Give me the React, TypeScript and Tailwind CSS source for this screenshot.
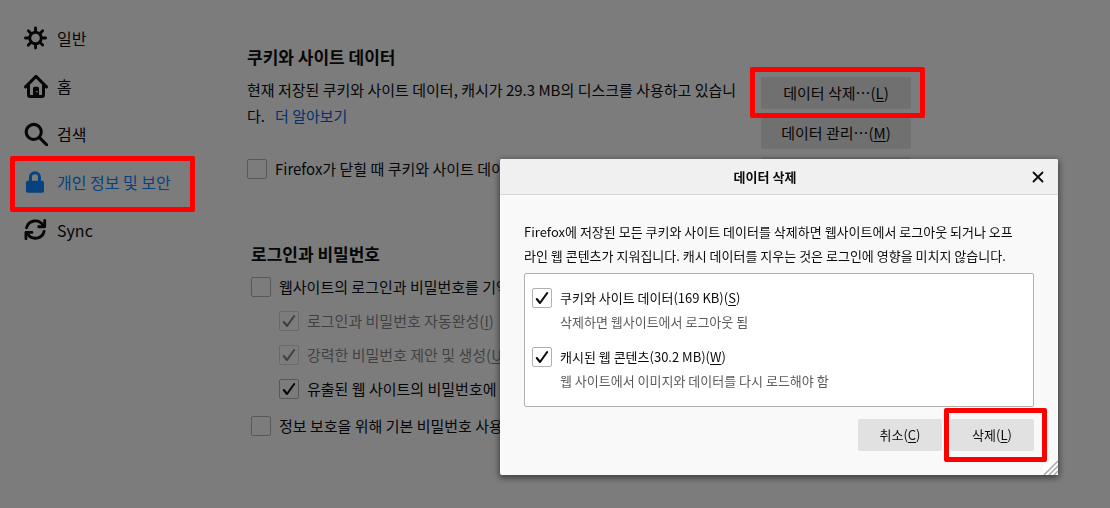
import { useState } from 'react'
import type { ReactNode } from 'react'
import { clsx } from 'clsx'

const GearIcon = () => (
  <svg viewBox="0 0 16 16" className="w-6 h-6" fill="currentColor" aria-hidden="true">
    <path d="M15 7h-2.1a4.967 4.967 0 0 0-.732-1.753l1.49-1.49a1 1 0 0 0-1.414-1.414l-1.49 1.49A4.968 4.968 0 0 0 9 3.1V1a1 1 0 0 0-2 0v2.1a4.968 4.968 0 0 0-1.753.732l-1.49-1.49a1 1 0 0 0-1.414 1.415l1.49 1.49A4.967 4.967 0 0 0 3.1 7H1a1 1 0 0 0 0 2h2.1a4.968 4.968 0 0 0 .737 1.763c-.014.013-.032.017-.045.03l-1.45 1.45a1 1 0 1 0 1.414 1.414l1.45-1.45c.013-.013.018-.031.03-.045A4.968 4.968 0 0 0 7 12.9V15a1 1 0 0 0 2 0v-2.1a4.968 4.968 0 0 0 1.753-.732l1.49 1.49a1 1 0 0 0 1.414-1.414l-1.49-1.49A4.967 4.967 0 0 0 12.9 9H15a1 1 0 0 0 0-2zM5 8a3 3 0 1 1 3 3 3 3 0 0 1-3-3z" transform="translate(0 .3) scale(.96)" />
  </svg>
)

const HomeIcon = () => (
  <svg viewBox="0 0 16 16" className="w-6 h-6" fill="none" stroke="currentColor" strokeWidth="2" strokeLinecap="round" strokeLinejoin="round" aria-hidden="true">
    <path d="M1 8.600l7-7 7 7" />
    <path d="M3 8V14a1 1 0 0 0 1 1h8a1 1 0 0 0 1-1V8" />
    <path d="M6 15V9.500a1 1 0 0 1 1-1h2a1 1 0 0 1 1 1V15zM8.600 11.200a.5.5 0 1 1-.01 0z" fill="currentColor" fillRule="evenodd" stroke="none" />
  </svg>
)

const SearchIcon = () => (
  <svg viewBox="0 0 16 16" className="w-6 h-6" fill="currentColor" aria-hidden="true">
    <path d="M15.707 14.293l-4.822-4.822a6.019 6.019 0 1 0-1.414 1.414l4.822 4.822a1 1 0 0 0 1.414-1.414zM6 10a4 4 0 1 1 4-4 4 4 0 0 1-4 4z" transform="translate(.5 .6)" />
  </svg>
)

const LockIcon = () => (
  <svg viewBox="0 0 16 16" className="w-6 h-6" aria-hidden="true">
    <rect x="1.300" y="7.200" width="12" height="8" rx="1.200" fill="currentColor" />
    <path d="M4.300 8V4.800a3 3 0 0 1 6 0V8" fill="none" stroke="currentColor" strokeWidth="2" />
  </svg>
)

const SyncIcon = () => (
  <svg viewBox="0 0 16 16" className="w-6 h-6" fill="none" stroke="currentColor" strokeWidth="1.900" strokeLinecap="round" strokeLinejoin="round" aria-hidden="true">
    <path d="M1.700 6.500A6 6 0 0 1 12.600 4.700" />
    <path d="M13.800 1.600V5.800H9.800" />
    <path d="M13.400 8.900A6 6 0 0 1 2.500 10.700" />
    <path d="M1.300 13.800V9.600H5.300" />
  </svg>
)

const NAV_ITEMS = [
  { id: 'general', label: '일반', icon: GearIcon },
  { id: 'home', label: '홈', icon: HomeIcon },
  { id: 'search', label: '검색', icon: SearchIcon },
  { id: 'privacy', label: '개인 정보 및 보안', icon: LockIcon },
  { id: 'sync', label: 'Sync', icon: SyncIcon },
]

// Red frame drawn above everything, including the backdrop
const Marker = ({ className }: { className: string }) => (
  <span className={clsx('absolute z-20 border-[5px] border-[#ff0000] rounded-xs pointer-events-none', className)} />
)

const Key = ({ children }: { children: string }) => (
  <>(<span className="underline underline-offset-2">{children}</span>)</>
)

interface CheckRowProps {
  id: string
  defaultChecked?: boolean
  disabled?: boolean
  className?: string
  children: ReactNode
}

function CheckRow({ id, defaultChecked, disabled, className, children }: CheckRowProps) {
  return (
    <div className={clsx('flex items-center gap-2', disabled && 'opacity-50', className)}>
      <span className="grid shrink-0">
        <input
          id={id}
          type="checkbox"
          defaultChecked={defaultChecked}
          disabled={disabled}
          className="peer col-start-1 row-start-1 appearance-none w-5 h-5 border border-[#b1b1b1] rounded-xs"
        />
        <svg viewBox="0 0 20 20" className="invisible peer-checked:visible col-start-1 row-start-1 w-5 h-5 pointer-events-none" fill="none" stroke="currentColor" strokeWidth="2.100" strokeLinecap="round" strokeLinejoin="round" aria-hidden="true">
          <path d="M4.800 11l3.200 4L15.200 5" />
        </svg>
      </span>
      <label htmlFor={id} className="whitespace-nowrap">{children}</label>
    </div>
  )
}

interface SettingsButtonProps {
  children?: ReactNode
  label?: string
  onClick?: () => void
}

const SettingsButton = ({ children, label, onClick }: SettingsButtonProps) => (
  <button type="button" aria-label={label} onClick={onClick} className="relative w-full h-8 rounded-xs bg-[#e1e1e2]">
    {children}
  </button>
)

function ClearDataDialog({ onClose }: { onClose: () => void }) {
  return (
    <div className="fixed inset-0 flex items-start justify-end pt-[159px] pr-[52px]">
      <div className="absolute inset-0 z-10 bg-black/50" />
      <section
        role="dialog"
        aria-labelledby="dialog-title"
        className="relative z-20 w-full max-w-[558px] rounded-xs bg-[#f9f9fa] text-[13px] leading-6 shadow-[0_2px_6px_1px_rgba(0,0,0,0.5)]"
      >
        <header className="flex items-center h-9 pr-3 border-b border-[#d7d7db] bg-[#f0f0f0] rounded-t-xs">
          <h2 id="dialog-title" className="flex-1 text-center font-bold">데이터 삭제</h2>
          <button type="button" aria-label="닫기" onClick={onClose} className="flex items-center justify-center w-4 h-6">
            <svg viewBox="0 0 16 16" className="w-4 h-4" fill="none" stroke="currentColor" strokeWidth="1.800" strokeLinecap="round" aria-hidden="true">
              <path d="M3.500 3.500l9 9M12.500 3.500l-9 9" />
            </svg>
          </button>
        </header>

        <div className="px-6 pt-[25px] pb-6">
          <p className="pr-3">
            Firefox에 저장된 모든 쿠키와 사이트 데이터를 삭제하면 웹사이트에서 로그아웃 되거나 오프라인 웹 콘텐츠가 지워집니다. 캐시 데이터를 지우는 것은 로그인에 영향을 미치지 않습니다.
          </p>

          <div className="flex flex-col gap-[11px] mt-[5px] px-[7px] pt-3 pb-[13px] bg-white border border-[#b1b1b1] rounded-xs">
            <div>
              <CheckRow id="clear-cookies" defaultChecked className="h-6">
                쿠키와 사이트 데이터(169 KB)<Key>S</Key>
              </CheckRow>
              <p className="pl-7 text-[#5b5b5f]">삭제하면 웹사이트에서 로그아웃 됨</p>
            </div>
            <div>
              <CheckRow id="clear-cache" defaultChecked className="h-6">
                캐시된 웹 콘텐츠(30.2 MB)<Key>W</Key>
              </CheckRow>
              <p className="pl-7 text-[#5b5b5f]">웹 사이트에서 이미지와 데이터를 다시 로드해야 함</p>
            </div>
          </div>

          <div className="flex justify-end gap-2 mt-3">
            <button type="button" onClick={onClose} className="w-[84px] h-8 rounded-xs bg-[#e1e1e1]">
              취소<Key>C</Key>
            </button>
            <button type="button" onClick={onClose} className="relative w-[84px] h-8 rounded-xs bg-[#e1e1e1]">
              삭제<Key>L</Key>
              <Marker className="-left-1.5 -right-[13px] -inset-y-[11px]" />
            </button>
          </div>
        </div>

        {/* Resize grip */}
        <svg viewBox="0 0 15 15" className="absolute right-0 bottom-0 w-[15px] h-[15px]" aria-hidden="true">
          <path d="M0 0h15v15H0z" fill="#fff" />
          <path d="M1 15L15 1M6 15l9-9M11 15l4-4" stroke="#a8a8a8" strokeWidth="1.500" />
        </svg>
      </section>
    </div>
  )
}

export default function App() {
  const [active, setActive] = useState('privacy')
  const [dialogOpen, setDialogOpen] = useState(true)

  return (
    <div className="flex min-h-screen overflow-hidden bg-[#f9f9fa] text-[#0c0c0d] text-[15px] leading-[26px] font-['Noto_Sans_CJK_KR',sans-serif]">
      <nav className="w-[247px] shrink-0 pt-3.5 pl-6 text-base">
        <ul>
          {NAV_ITEMS.map(({ id, label, icon: Icon }) => (
            <li key={id} className="flex">
              <a
                href={`#${id}`}
                onClick={() => setActive(id)}
                className={clsx('relative flex items-center gap-[9px] h-12', active === id && 'text-[#0a84ff]')}
              >
                <Icon />
                {label}
                {id === 'privacy' && <Marker className="-left-3.5 -right-6 -top-0.5 -bottom-1.5" />}
              </a>
            </li>
          ))}
        </ul>
      </nav>

      <main className="flex-1 min-w-0 max-w-[664px] pt-11">
        <section>
          <h2 className="text-[17px] font-bold">쿠키와 사이트 데이터</h2>
          <div className="flex gap-4 mt-[7px]">
            <div className="flex-1 min-w-0">
              <p>
                현재 저장된 쿠키와 사이트 데이터, 캐시가 29.3 MB의 디스크를 사용하고 있습니다.
                <a href="#learn-more" className="ml-2.5 text-[#0060df]">더 알아보기</a>
              </p>
              <CheckRow id="delete-on-close" className="mt-[27px]">
                Firefox가 닫힐 때 쿠키와 사이트 데이터
              </CheckRow>
            </div>
            <div className="flex flex-col gap-2 w-[150px] shrink-0">
              <SettingsButton onClick={() => setDialogOpen(true)}>
                데이터 삭제…<Key>L</Key>
                <Marker className="-left-[11px] -right-3.5 -top-2.5 -bottom-[9px]" />
              </SettingsButton>
              <SettingsButton>데이터 관리…<Key>M</Key></SettingsButton>
              <SettingsButton label="예외 관리" />
            </div>
          </div>
        </section>

        <section className="mt-[52px] pl-1">
          <h2 className="text-[17px] font-bold">로그인과 비밀번호</h2>
          <div className="flex flex-col gap-2 mt-[7px]">
            <CheckRow id="save-logins">웹사이트의 로그인과 비밀번호를 기억</CheckRow>
            <CheckRow id="autofill" defaultChecked disabled className="ml-7">
              로그인과 비밀번호 자동완성<Key>I</Key>
            </CheckRow>
            <CheckRow id="suggest" defaultChecked disabled className="ml-7">
              강력한 비밀번호 제안 및 생성<Key>U</Key>
            </CheckRow>
            <CheckRow id="breach-alerts" defaultChecked className="ml-7">
              유출된 웹 사이트의 비밀번호에
            </CheckRow>
          </div>
          <CheckRow id="primary-password" className="mt-[11px]">
            정보 보호을 위해 기본 비밀번호 사용
          </CheckRow>
        </section>
      </main>

      {dialogOpen && <ClearDataDialog onClose={() => setDialogOpen(false)} />}
    </div>
  )
}
